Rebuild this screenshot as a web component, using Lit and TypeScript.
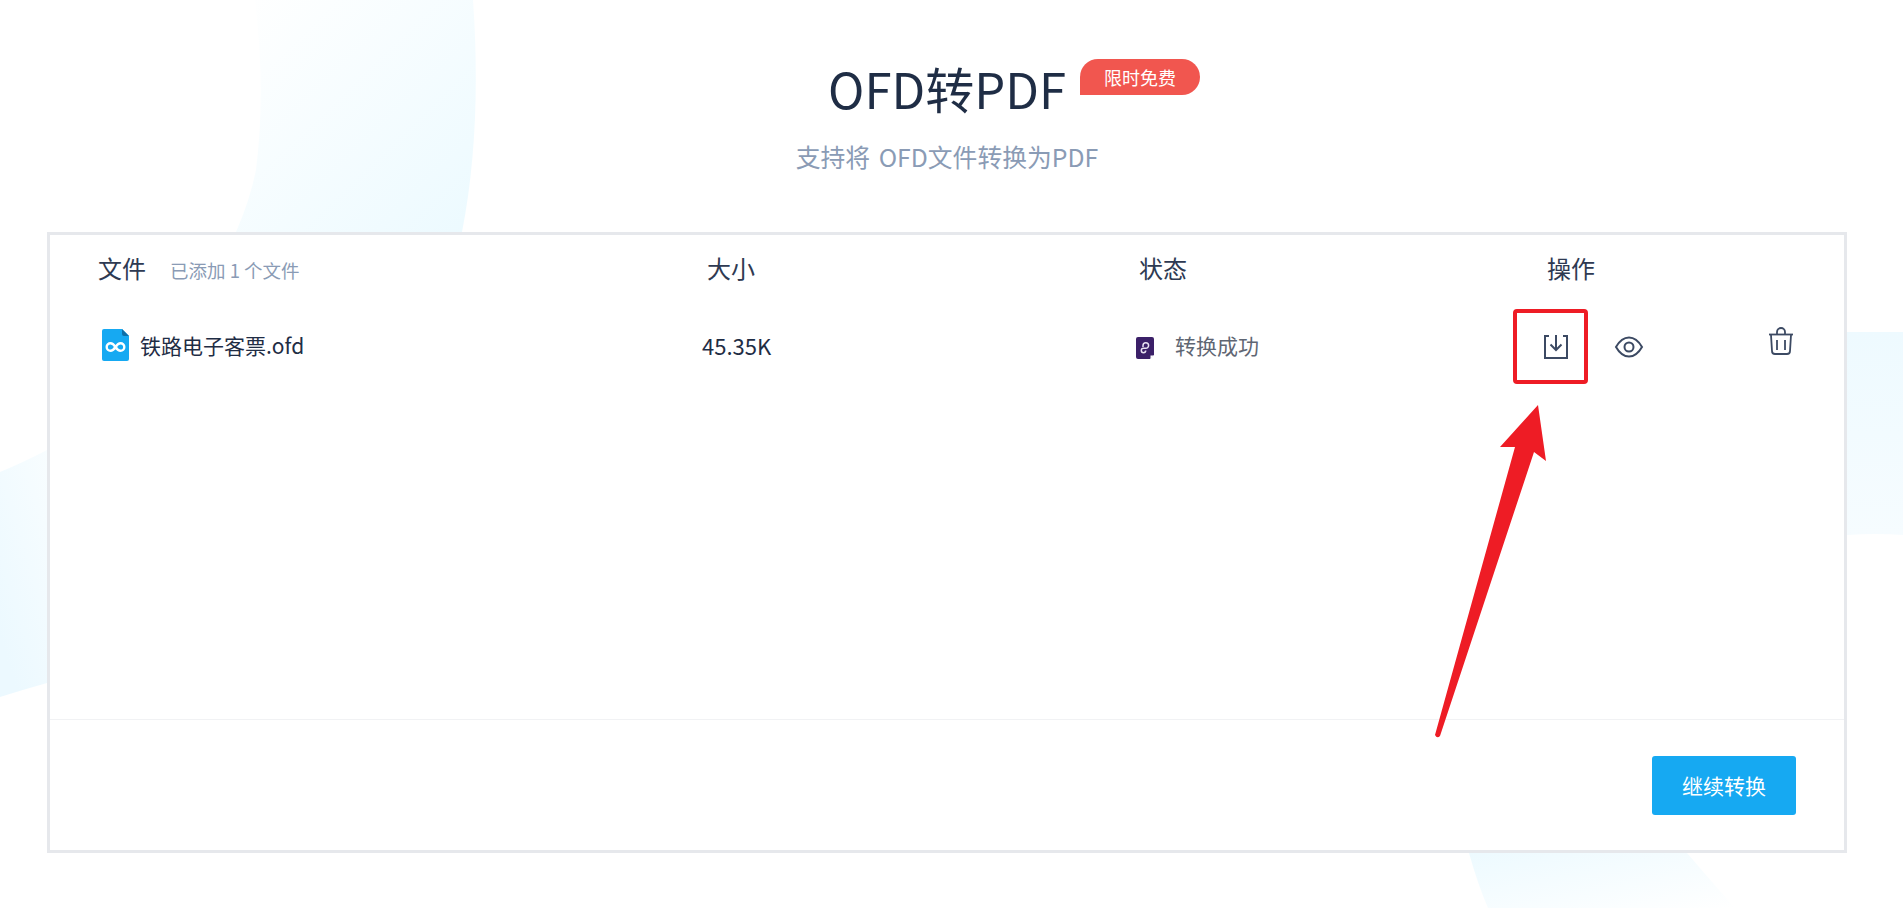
import { LitElement, html, css, svg } from "lit";
import { customElement } from "lit/decorators.js";

@customElement("app-root")
export class AppRoot extends LitElement {
  static styles = css`
    :host {
      display: block;
      position: relative;
      width: 1903px;
      height: 908px;
      overflow: hidden;
      background: #fff;
      font-family: "Noto Sans CJK SC", "Noto Sans", sans-serif;
    }
    .bg, .overlay {
      position: absolute;
      left: 0;
      top: 0;
      width: 1903px;
      height: 908px;
      pointer-events: none;
    }
    .page {
      position: relative;
      width: 1894px;
      display: flex;
      flex-direction: column;
      align-items: center;
      padding-top: 52px;
    }
    .head {
      display: flex;
      align-items: flex-start;
      margin-left: 134px;
    }
    h1 {
      margin: 0;
      font-size: 49px;
      font-weight: 400;
      line-height: 72px;
      color: #1f2d45;
    }
    .badge {
      margin: 7px 0 0 14px;
      width: 120px;
      height: 36px;
      border-radius: 18px 18px 18px 0;
      background: #f1564f;
      color: #fff;
      font-size: 18px;
      line-height: 36px;
      text-align: center;
    }
    .sub {
      margin: 14px 0 0;
      font-size: 24.800px;
      word-spacing: 3px;
      line-height: 36px;
      color: #8a9bb5;
    }
    .card {
      box-sizing: border-box;
      margin-top: 58px;
      width: 1800px;
      height: 621px;
      border: 3px solid #e6e8ec;
      background: #fff;
      display: flex;
      flex-direction: column;
    }
    .main { flex: 1; }
    .row { display: grid; }
    .heads {
      grid-template-columns: 609px 432px 408px 1fr;
      grid-auto-rows: 34px;
      padding: 16px 0 0 48px;
      font-size: 24px;
      line-height: 34px;
      color: #2e3a52;
    }
    .heads small {
      margin-left: 24px;
      font-size: 18.500px;
      color: #8a9bb5;
    }
    .items {
      grid-template-columns: 600px 434px 408px 1fr;
      padding: 44px 0 0 52px;
      font-size: 21px;
      line-height: 32px;
      color: #1f2d45;
    }
    .cell { display: flex; align-items: center; height: 32px; }
    .file-icon { margin-right: 11px; }
    .size { font-size: 22px; }
    .status { color: #5f6673; }
    .status-icon { margin: 6px 21px 0 0; }
    .ops { align-items: flex-start; }
    .op-down { margin-top: 6px; }
    .op-eye { margin: 7px 0 0 47px; }
    .op-trash { margin: -2px 0 0 126px; }
    .foot {
      height: 131px;
      box-sizing: border-box;
      border-top: 1px solid #f1f2f4;
      display: flex;
      justify-content: flex-end;
      padding: 36px 48px 0 0;
    }
    .btn {
      width: 144px;
      height: 59px;
      border-radius: 3px;
      background: #16a9f2;
      color: #fff;
      font-size: 21px;
      line-height: 59px;
      text-align: center;
    }
    svg.i { display: block; flex: none; overflow: visible; }
  `;

  private background() {
    return svg`
      <defs>
        <linearGradient id="g1" x1="0" y1="0" x2="1" y2="1">
          <stop offset="0" stop-color="#ffffff"/>
          <stop offset="1" stop-color="#ecfaff"/>
        </linearGradient>
        <linearGradient id="g2" x1="1" y1="0" x2="0.4" y2="1">
          <stop offset="0" stop-color="#f8fdff"/>
          <stop offset="1" stop-color="#ecf9ff"/>
        </linearGradient>
        <linearGradient id="g3" x1="0" y1="0" x2="1" y2="1">
          <stop offset="0" stop-color="#edfaff"/>
          <stop offset="1" stop-color="#ffffff"/>
        </linearGradient>
        <linearGradient id="g4" x1="0" y1="0" x2="0" y2="1">
          <stop offset="0" stop-color="#eefaff"/>
          <stop offset="1" stop-color="#f6fcff"/>
        </linearGradient>
      </defs>
      <path d="M255 0 Q266 90 256 170 Q250 200 236 232 L462 232 Q482 130 473 0 Z" fill="url(#g1)"/>
      <path d="M0 472 Q22 463 47 450 L47 683 Q22 690 0 697 Z" fill="url(#g2)"/>
      <path d="M1847 332 L1903 332 L1903 535 Q1875 533 1847 535 Z" fill="url(#g4)"/>
      <path d="M1469 853 Q1478 885 1488 908 L1735 908 Q1710 880 1687 853 Z" fill="url(#g3)"/>
    `;
  }

  render() {
    return html`
      <svg class="bg" viewBox="0 0 1903 908">${this.background()}</svg>
      <div class="page">
        <div class="head">
          <h1>OFD转PDF</h1>
          <div class="badge">限时免费</div>
        </div>
        <p class="sub">支持将 OFD文件转换为PDF</p>
        <div class="card">
          <div class="main">
            <div class="row heads">
              <div><span>文件</span><small>已添加 1 个文件</small></div>
              <div>大小</div>
              <div>状态</div>
              <div>操作</div>
            </div>
            <div class="row items">
              <div class="cell">
                <svg class="i file-icon" width="27" height="32" viewBox="0 0 27 32">
                  <path d="M2 0H20L27 7V30a2 2 0 0 1-2 2H2a2 2 0 0 1-2-2V2a2 2 0 0 1 2-2Z" fill="#16a9f2"/>
                  <path d="M20 0L27 7H22a2 2 0 0 1-2-2Z" fill="#0f6fa8"/>
                  <path d="M13.500 18c-2-3-3.200-3.800-5-3.800a3.800 3.800 0 0 0 0 7.600c1.800 0 3-.8 5-3.800s3.200-3.800 5-3.800a3.800 3.800 0 0 1 0 7.600c-1.800 0-3-.8-5-3.800Z" fill="none" stroke="#fff" stroke-width="2.400"/>
                </svg>
                <span>铁路电子客票.ofd</span>
              </div>
              <div class="cell size">45.35K</div>
              <div class="cell status">
                <svg class="i status-icon" width="18" height="22" viewBox="0 0 18 22">
                  <path d="M2 0H16a2 2 0 0 1 2 2V18L14 22H2a2 2 0 0 1-2-2V2a2 2 0 0 1 2-2Z" fill="#3b2068"/>
                  <path d="M14.500 18.500H18L14.500 22Z" fill="#fff"/>
                  <path d="M7 10V8.500a2.800 2.800 0 1 1 2.800 2.800H7.500a2.200 2.200 0 1 0 2.200 2.200" fill="none" stroke="#e8e2f2" stroke-width="1.500"/>
                </svg>
                <span>转换成功</span>
              </div>
              <div class="cell ops">
                <svg class="i op-down" width="24" height="24" viewBox="0 0 24 24" fill="none" stroke="#3c4a63" stroke-width="2">
                  <path d="M5 1H1V23H23V1H19"/>
                  <path d="M12 0V15M6.500 9.500L12 15L17.500 9.500"/>
                </svg>
                <svg class="i op-eye" width="28" height="22" viewBox="0 0 28 22" fill="none" stroke="#3c4a63" stroke-width="2">
                  <path d="M1 11C5 4 9.500 1.500 14 1.500S23 4 27 11C23 18 18.500 20.500 14 20.500S5 18 1 11Z"/>
                  <circle cx="14" cy="11" r="4.500"/>
                </svg>
                <svg class="i op-trash" width="24" height="28" viewBox="0 0 24 28" fill="none" stroke="#3c4a63" stroke-width="1.800">
                  <path d="M0 7.500H24"/>
                  <path d="M8 7V5a4 4 0 0 1 8 0V7"/>
                  <path d="M2 8L3 24a3 3 0 0 0 3 3H18a3 3 0 0 0 3-3L22 8"/>
                  <path d="M8 13V23M16 13V23"/>
                </svg>
              </div>
            </div>
          </div>
          <div class="foot"><div class="btn">继续转换</div></div>
        </div>
      </div>
      <svg class="overlay" viewBox="0 0 1903 908" fill="none">
        <rect x="1515" y="311" width="71" height="71" rx="2" stroke="#ee1c25" stroke-width="4"/>
        <path d="M1538 405L1546 461L1534 452L1440 736Q1437 739 1435 735L1515 447L1500 447Z" fill="#ee1c25"/>
      </svg>
    `;
  }
}
